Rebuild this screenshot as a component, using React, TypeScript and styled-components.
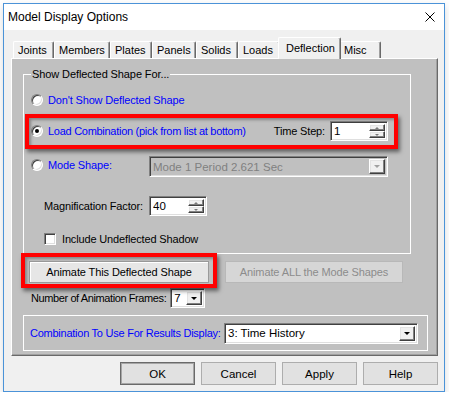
import styled, { createGlobalStyle } from 'styled-components';

const GlobalStyle = createGlobalStyle`
  html, body {
    margin: 0;
    padding: 0;
    background: #ffffff;
  }
  body {
    font-family: "Liberation Sans", Arial, sans-serif;
    font-size: 11px;
    color: #000;
  }
  * {
    box-sizing: border-box;
  }
`;

const sunken = `
  border: 1px solid;
  border-color: #808080 #ffffff #ffffff #808080;
  box-shadow: inset 1px 1px 0 #404040, inset -1px -1px 0 #dfdfdf;
`;

const raised = `
  border: 1px solid;
  border-color: #ffffff #404040 #404040 #ffffff;
  box-shadow: inset -1px -1px 0 #808080, inset 1px 1px 0 #e3e3e3;
`;

const Window = styled.div`
  margin: 3px 0 0 3px;
  width: 442px;
  height: 389px;
  border: 1px solid #4b93d8;
  background: #f0f0f0;
  display: flex;
  flex-direction: column;
  box-shadow: 0 3px 8px rgba(0, 0, 0, 0.15);
`;

const TitleBar = styled.div`
  flex: none;
  height: 26px;
  background: #ffffff;
  display: flex;
  align-items: center;
  padding-left: 4px;
`;

const Title = styled.span`
  flex: 1;
  font-size: 12px;
`;

const CloseBox = styled.div`
  width: 28px;
  height: 26px;
  display: flex;
  align-items: center;
  justify-content: center;
`;

const Body = styled.div`
  flex: 1;
  display: flex;
  flex-direction: column;
  padding: 7px 6px 6px 7px;
`;

const TabStrip = styled.div`
  display: flex;
  align-items: flex-end;
  height: 21px;
  padding-left: 2px;
  position: relative;
  z-index: 1;
`;

const Tab = styled.div<{ $w: number; $active?: boolean }>`
  flex: none;
  width: ${p => (p.$active ? p.$w + 4 : p.$w)}px;
  height: ${p => (p.$active ? 22 : 17)}px;
  margin: ${p => (p.$active ? '0 -2px -1px' : '0')};
  position: relative;
  z-index: ${p => (p.$active ? 2 : 1)};
  background: #f0f0f0;
  border-top: 1px solid #ffffff;
  border-left: 1px solid #ffffff;
  border-right: 1px solid #696969;
  box-shadow: inset -1px 0 0 #a0a0a0;
  border-radius: 2px 2px 0 0;
  display: flex;
  align-items: center;
  padding-left: ${p => (p.$active ? 7 : 4)}px;
  padding-bottom: ${p => (p.$active ? 1 : 0)}px;
  white-space: nowrap;
`;

const Panel = styled.div`
  position: relative;
  height: 298px;
  background: #c0c0c0;
  border: 1px solid;
  border-color: #ffffff #696969 #696969 #ffffff;
  box-shadow: inset -1px -1px 0 #a0a0a0;
  display: flex;
  flex-direction: column;
  align-items: flex-start;
`;

const Group = styled.fieldset`
  margin: 8px 0 0 11px;
  padding: 11px 22px 0 7px;
  width: 388px;
  height: 187px;
  min-inline-size: 0;
  border: 1px solid #ffffff;
  display: flex;
  flex-direction: column;
`;

const Legend = styled.legend`
  padding: 0 1px;
  margin-left: 0;
  line-height: 14px;
  font-size: 11px;
  letter-spacing: -0.1px;
`;

const OptionRow = styled.div<{ $mt: number; $h: number; $indent?: number; $top?: boolean }>`
  display: flex;
  align-items: ${p => (p.$top ? 'flex-start' : 'center')};
  justify-content: space-between;
  margin-top: ${p => p.$mt}px;
  height: ${p => p.$h}px;
  padding-left: ${p => p.$indent ?? 0}px;
`;

const Inline = styled.div<{ $gap: number; $mt?: number }>`
  display: flex;
  align-items: center;
  gap: ${p => p.$gap}px;
  margin-top: ${p => p.$mt ?? 0}px;
`;

const RadioCircle = styled.span<{ $checked?: boolean }>`
  flex: none;
  position: relative;
  width: 12px;
  height: 12px;
  border-radius: 50%;
  background: #ffffff;
  border: 1px solid;
  border-color: #808080 #ffffff #ffffff #808080;
  box-shadow: inset 1px 1px 0 #404040, inset -1px -1px 0 #dfdfdf;
  &::after {
    content: '';
    display: ${p => (p.$checked ? 'block' : 'none')};
    position: absolute;
    left: 3px;
    top: 3px;
    width: 4px;
    height: 4px;
    border-radius: 50%;
    background: #000;
  }
`;

const CheckBox = styled.span`
  flex: none;
  width: 12px;
  height: 12px;
  background: #ffffff;
  ${sunken}
`;

const Label = styled.span<{ $blue?: boolean; $w?: number; $tight?: number }>`
  color: ${p => (p.$blue ? '#0000ff' : '#000000')};
  white-space: nowrap;
  line-height: 14px;
  letter-spacing: ${p => p.$tight ?? -0.15}px;
  ${p => (p.$w ? `width: ${p.$w}px; flex: none;` : '')}
`;

const Field = styled.div<{ $w: number; $h: number; $disabled?: boolean }>`
  flex: none;
  width: ${p => p.$w}px;
  height: ${p => p.$h}px;
  background: ${p => (p.$disabled ? '#c0c0c0' : '#ffffff')};
  ${sunken}
  display: flex;
  align-items: center;
  padding: 2px 2px 2px 3px;
`;

const FieldText = styled.span<{ $disabled?: boolean }>`
  flex: 1;
  font-size: 11.5px;
  color: ${p => (p.$disabled ? '#808080' : '#000000')};
  white-space: nowrap;
  overflow: hidden;
`;

const SpinStack = styled.div`
  flex: none;
  width: 16px;
  height: 100%;
  display: flex;
  flex-direction: column;
`;

const SpinButton = styled.div`
  flex: 1;
  background: #f0f0f0;
  ${raised}
  display: flex;
  align-items: center;
  justify-content: center;
`;

const Arrow = styled.span<{ $up?: boolean; $size: number; $color: string }>`
  width: 0;
  height: 0;
  border-left: ${p => p.$size}px solid transparent;
  border-right: ${p => p.$size}px solid transparent;
  ${p => (p.$up ? 'border-bottom' : 'border-top')}: ${p => p.$size}px solid ${p => p.$color};
`;

const DropButton = styled.div`
  flex: none;
  width: 16px;
  height: 100%;
  background: #f0f0f0;
  ${raised}
  display: flex;
  align-items: center;
  justify-content: center;
`;

const AnimateRow = styled.div`
  display: flex;
  gap: 16px;
  margin: 7px 0 0 17px;
`;

const PanelButton = styled.div<{ $w: number; $disabled?: boolean }>`
  width: ${p => p.$w}px;
  height: 22px;
  background: ${p => (p.$disabled ? '#d6d6d6' : '#e6e6e6')};
  border: 1px solid ${p => (p.$disabled ? '#b8b8b8' : '#9a9a9a')};
  box-shadow: ${p => (p.$disabled ? 'none' : 'inset 1px 1px 0 #ffffff')};
  color: ${p => (p.$disabled ? '#8c8c8c' : '#000000')};
  letter-spacing: -0.1px;
  display: flex;
  align-items: center;
  justify-content: center;
  white-space: nowrap;
`;

const FramesRow = styled.div`
  display: flex;
  align-items: center;
  gap: 4px;
  height: 20px;
  margin: 5px 0 0 19px;
`;

const ResultsBox = styled.div`
  margin: 7px 0 0 11px;
  width: 405px;
  height: 36px;
  border: 1px solid #ffffff;
  display: flex;
  align-items: center;
  justify-content: space-between;
  padding: 0 9px 0 6px;
`;

const Highlight = styled.div<{ $x: number; $y: number; $w: number; $h: number }>`
  position: absolute;
  left: ${p => p.$x}px;
  top: ${p => p.$y}px;
  width: ${p => p.$w}px;
  height: ${p => p.$h}px;
  border: 4px solid #ff0000;
  box-shadow: 2px 3px 4px rgba(0, 0, 0, 0.5), inset 2px 2px 3px rgba(0, 0, 0, 0.3);
  pointer-events: none;
`;

const ButtonBar = styled.div`
  display: flex;
  justify-content: flex-end;
  gap: 6px;
  margin-top: 6px;
`;

const DialogButton = styled.div<{ $default?: boolean }>`
  width: 75px;
  height: 23px;
  background: #e1e1e1;
  border: 1px solid ${p => (p.$default ? '#6a6a6a' : '#adadad')};
  box-shadow: ${p => (p.$default ? 'inset 0 0 0 1px #a6a6a6' : 'none')};
  font-size: 11.5px;
  display: flex;
  align-items: center;
  justify-content: center;
`;

const tabs = [
  { label: 'Joints', w: 41 },
  { label: 'Members', w: 56 },
  { label: 'Plates', w: 42 },
  { label: 'Panels', w: 44 },
  { label: 'Solids', w: 42 },
  { label: 'Loads', w: 42 },
  { label: 'Deflection', w: 59, active: true },
  { label: 'Misc', w: 42 },
];

const App = () => {
  return (
    <>
      <GlobalStyle />
      <Window>
        <TitleBar>
          <Title>Model Display Options</Title>
          <CloseBox>
            <svg width="10" height="10" viewBox="0 0 10 10">
              <path d="M0.5 0.5 L9.5 9.5 M9.5 0.5 L0.5 9.5" stroke="#000" strokeWidth="1" />
            </svg>
          </CloseBox>
        </TitleBar>
        <Body>
          <TabStrip>
            {tabs.map(t => (
              <Tab key={t.label} $w={t.w} $active={t.active}>{t.label}</Tab>
            ))}
          </TabStrip>
          <Panel>
            <Group>
              <Legend>Show Deflected Shape For...</Legend>
              <OptionRow $mt={0} $h={16}>
                <Inline $gap={5}>
                  <RadioCircle />
                  <Label $blue>Don't Show Deflected Shape</Label>
                </Inline>
              </OptionRow>
              <OptionRow $mt={13} $h={20}>
                <Inline $gap={5}>
                  <RadioCircle $checked />
                  <Label $blue $tight={-0.28}>Load Combination (pick from list at bottom)</Label>
                </Inline>
                <Inline $gap={5}>
                  <Label>Time Step:</Label>
                  <Field $w={58} $h={20}>
                    <FieldText>1</FieldText>
                    <SpinStack>
                      <SpinButton><Arrow $up $size={2} $color="#7a7a7a" /></SpinButton>
                      <SpinButton><Arrow $size={2} $color="#7a7a7a" /></SpinButton>
                    </SpinStack>
                  </Field>
                </Inline>
              </OptionRow>
              <OptionRow $mt={15} $h={21} $top>
                <Inline $gap={5} $mt={2}>
                  <RadioCircle />
                  <Label $blue>Mode Shape:</Label>
                </Inline>
                <Field $w={239} $h={21} $disabled>
                  <FieldText $disabled>Mode 1 Period 2.621 Sec</FieldText>
                  <DropButton><Arrow $size={3.5} $color="#a0a0a0" /></DropButton>
                </Field>
              </OptionRow>
              <OptionRow $mt={19} $h={20} $indent={13}>
                <Inline $gap={0}>
                  <Label $w={105}>Magnification Factor:</Label>
                  <Field $w={58} $h={20}>
                    <FieldText>40</FieldText>
                    <SpinStack>
                      <SpinButton><Arrow $up $size={2} $color="#7a7a7a" /></SpinButton>
                      <SpinButton><Arrow $size={2} $color="#7a7a7a" /></SpinButton>
                    </SpinStack>
                  </Field>
                </Inline>
              </OptionRow>
              <OptionRow $mt={16} $h={13} $indent={13}>
                <Inline $gap={6}>
                  <CheckBox />
                  <Label>Include Undeflected Shadow</Label>
                </Inline>
              </OptionRow>
            </Group>
            <AnimateRow>
              <PanelButton $w={180}>Animate This Deflected Shape</PanelButton>
              <PanelButton $w={178} $disabled>Animate ALL the Mode Shapes</PanelButton>
            </AnimateRow>
            <FramesRow>
              <Label $tight={-0.4}>Number of Animation Frames:</Label>
              <Field $w={35} $h={20}>
                <FieldText>7</FieldText>
                <DropButton><Arrow $size={3.5} $color="#000" /></DropButton>
              </Field>
            </FramesRow>
            <ResultsBox>
              <Label $blue $tight={-0.25}>Combination To Use For Results Display:</Label>
              <Field $w={194} $h={21}>
                <FieldText>3: Time History</FieldText>
                <DropButton><Arrow $size={3.5} $color="#000" /></DropButton>
              </Field>
            </ResultsBox>
            <Highlight $x={13} $y={55} $w={373} $h={35} />
            <Highlight $x={9} $y={194} $w={196} $h={35} />
          </Panel>
          <ButtonBar>
            <DialogButton $default>OK</DialogButton>
            <DialogButton>Cancel</DialogButton>
            <DialogButton>Apply</DialogButton>
            <DialogButton>Help</DialogButton>
          </ButtonBar>
        </Body>
      </Window>
    </>
  );
};

export default App;
